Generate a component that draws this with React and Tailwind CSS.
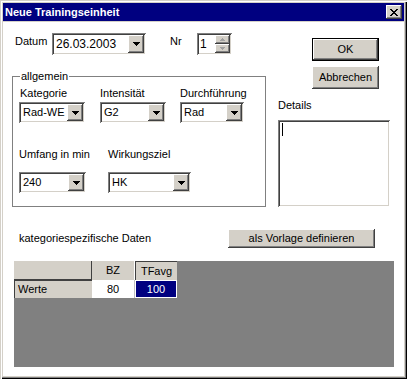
import React from "react";

const raised =
  "shadow-[inset_-1px_-1px_#404040,inset_1px_1px_#ffffff,inset_-2px_-2px_#808080,inset_2px_2px_#d4d0c8]";
const sunken =
  "shadow-[inset_1px_1px_#808080,inset_-1px_-1px_#ffffff,inset_2px_2px_#404040,inset_-2px_-2px_#d4d0c8]";

function Arrow() {
  return (
    <svg width="7" height="4" viewBox="0 0 7 4" shapeRendering="crispEdges">
      <rect x="0" y="0" width="7" height="1" fill="#000" />
      <rect x="1" y="1" width="5" height="1" fill="#000" />
      <rect x="2" y="2" width="3" height="1" fill="#000" />
      <rect x="3" y="3" width="1" height="1" fill="#000" />
    </svg>
  );
}

function Combo({ value, className }) {
  return (
    <div className={`flex items-stretch bg-white p-[2px] ${sunken} ${className}`}>
      <span className="flex flex-1 items-center pl-[2px]">{value}</span>
      <span className={`flex w-[16px] items-center justify-center bg-[#d4d0c8] ${raised}`}>
        <Arrow />
      </span>
    </div>
  );
}

function Button({ children, className, isDefault }) {
  return (
    <div
      className={`flex items-center justify-center bg-[#d4d0c8] ${
        isDefault ? "border border-black" : ""
      } ${className}`}
    >
      <div className={`flex h-full w-full items-center justify-center ${raised}`}>{children}</div>
    </div>
  );
}

function SpinArrow({ up }) {
  return (
    <svg width="5" height="3" viewBox="0 0 5 3" shapeRendering="crispEdges">
      {up ? (
        <>
          <rect x="2" y="0" width="1" height="1" fill="#a0a0a0" />
          <rect x="1" y="1" width="3" height="1" fill="#a0a0a0" />
          <rect x="0" y="2" width="5" height="1" fill="#a0a0a0" />
        </>
      ) : (
        <>
          <rect x="0" y="0" width="5" height="1" fill="#a0a0a0" />
          <rect x="1" y="1" width="3" height="1" fill="#a0a0a0" />
          <rect x="2" y="2" width="1" height="1" fill="#a0a0a0" />
        </>
      )}
    </svg>
  );
}

export default function App() {
  return (
    <div className="font-['Liberation_Sans',Arial,sans-serif] text-[11px] leading-[13px] text-black">
      <div className="flex h-[379px] w-[407px] flex-col bg-[#d4d0c8] p-[3px] shadow-[inset_1px_1px_#d4d0c8,inset_2px_2px_#ffffff,inset_-1px_-1px_#000000,inset_-2px_-2px_#808080]">
        {/* title bar */}
        <div className="flex h-[18px] items-center justify-between bg-[#000080] pl-[2px] pr-[2px]">
          <span className="text-[11px] font-bold text-white">Neue Trainingseinheit</span>
          <div className={`flex h-[14px] w-[16px] items-center justify-center bg-[#d4d0c8] ${raised}`}>
            <svg width="8" height="7" viewBox="0 0 8 7" shapeRendering="crispEdges">
              <path d="M0 0h2v1h-2zM6 0h2v1h-2zM1 1h2v1h-2zM5 1h2v1h-2zM2 2h4v1h-4zM3 3h2v1h-2zM2 4h4v1h-4zM1 5h2v1h-2zM5 5h2v1h-2zM0 6h2v1h-2zM6 6h2v1h-2z" fill="#000" />
            </svg>
          </div>
        </div>

        {/* client */}
        <div className="mt-[1px] flex flex-1 flex-col bg-white pl-[9px]">
          <div className="flex items-start">
            {/* left */}
            <div className="mt-[11px] flex w-[254px] flex-col">
              <div className="flex items-start">
                <span className="ml-[3px] mt-[2px] w-[37px]">Datum</span>
                <Combo value="26.03.2003" className="h-[22px] w-[94px] text-[12px]" />
                <span className="ml-[24px] mt-[2px] w-[27px]">Nr</span>
                <div className={`flex h-[22px] w-[35px] bg-white p-[2px] ${sunken}`}>
                  <span className="flex flex-1 items-center pl-[1px] text-[12px]">1</span>
                  <div className="flex w-[15px] flex-col">
                    <div className={`flex flex-1 items-center justify-center bg-[#d4d0c8] ${raised}`}>
                      <SpinArrow up />
                    </div>
                    <div className={`flex flex-1 items-center justify-center bg-[#d4d0c8] ${raised}`}>
                      <SpinArrow />
                    </div>
                  </div>
                </div>
              </div>

              <fieldset className="mt-[15px] border border-[#808080] pb-[13px] pl-[6px]">
                <legend className="ml-[1px] px-[1px]">allgemein</legend>
                <div className="mt-[4px] flex">
                  <div className="flex w-[81px] flex-col gap-[2px]">
                    <span className="pl-[1px]">Kategorie</span>
                    <Combo value="Rad-WE" className="h-[21px] w-[66px]" />
                  </div>
                  <div className="flex w-[80px] flex-col gap-[2px]">
                    <span>Intensität</span>
                    <Combo value="G2" className="h-[21px] w-[66px]" />
                  </div>
                  <div className="flex flex-col gap-[2px]">
                    <span>Durchführung</span>
                    <Combo value="Rad" className="h-[21px] w-[64px]" />
                  </div>
                </div>
                <div className="mt-[25px] flex">
                  <div className="flex w-[89px] flex-col gap-[11px]">
                    <span>Umfang in min</span>
                    <Combo value="240" className="h-[21px] w-[67px]" />
                  </div>
                  <div className="flex flex-col gap-[11px]">
                    <span>Wirkungsziel</span>
                    <Combo value="HK" className="h-[21px] w-[83px]" />
                  </div>
                </div>
              </fieldset>
            </div>

            {/* right */}
            <div className="ml-[12px] mt-[16px] flex flex-col">
              <Button isDefault className="ml-[34px] h-[23px] w-[67px]">
                OK
              </Button>
              <Button className="ml-[34px] mt-[5px] h-[23px] w-[67px]">Abbrechen</Button>
              <span className="mt-[10px]">Details</span>
              <div className={`mt-[8px] h-[87px] w-[112px] bg-white p-[3px] ${sunken}`}>
                <div className="ml-[1px] h-[13px] w-px bg-black" />
              </div>
            </div>
          </div>

          {/* bottom row */}
          <div className="mt-[22px] flex items-center">
            <span className="ml-[7px] w-[209px]">kategoriespezifische Daten</span>
            <Button className="h-[19px] w-[147px]">als Vorlage definieren</Button>
          </div>

          {/* grid */}
          <div className="ml-[2px] mt-[13px] flex h-[106px] w-[380px] flex-col bg-[#808080]">
            <div className="flex h-[19px]">
              <div className="w-[78px] border-b border-r border-b-[#404040] border-r-[#404040] bg-[#d4d0c8]" />
              <div className="flex w-[43px] items-center justify-center border-r border-white bg-[#d4d0c8]">
                BZ
              </div>
              <div className="flex w-[42px] items-center justify-center border-l border-t border-[#404040] bg-[#d4d0c8]">
                TFavg
              </div>
            </div>
            <div className="flex h-[18px]">
              <div className="flex w-[78px] items-center border-l border-t border-[#404040] bg-[#d4d0c8] pl-[3px]">
                Werte
              </div>
              <div className="flex w-[43px] items-center justify-center border-r border-[#c0c0c0] bg-white">
                80
              </div>
              <div className="flex w-[42px] items-center justify-center border border-white bg-[#000080] text-white">
                100
              </div>
            </div>
          </div>
        </div>
      </div>
    </div>
  );
}
